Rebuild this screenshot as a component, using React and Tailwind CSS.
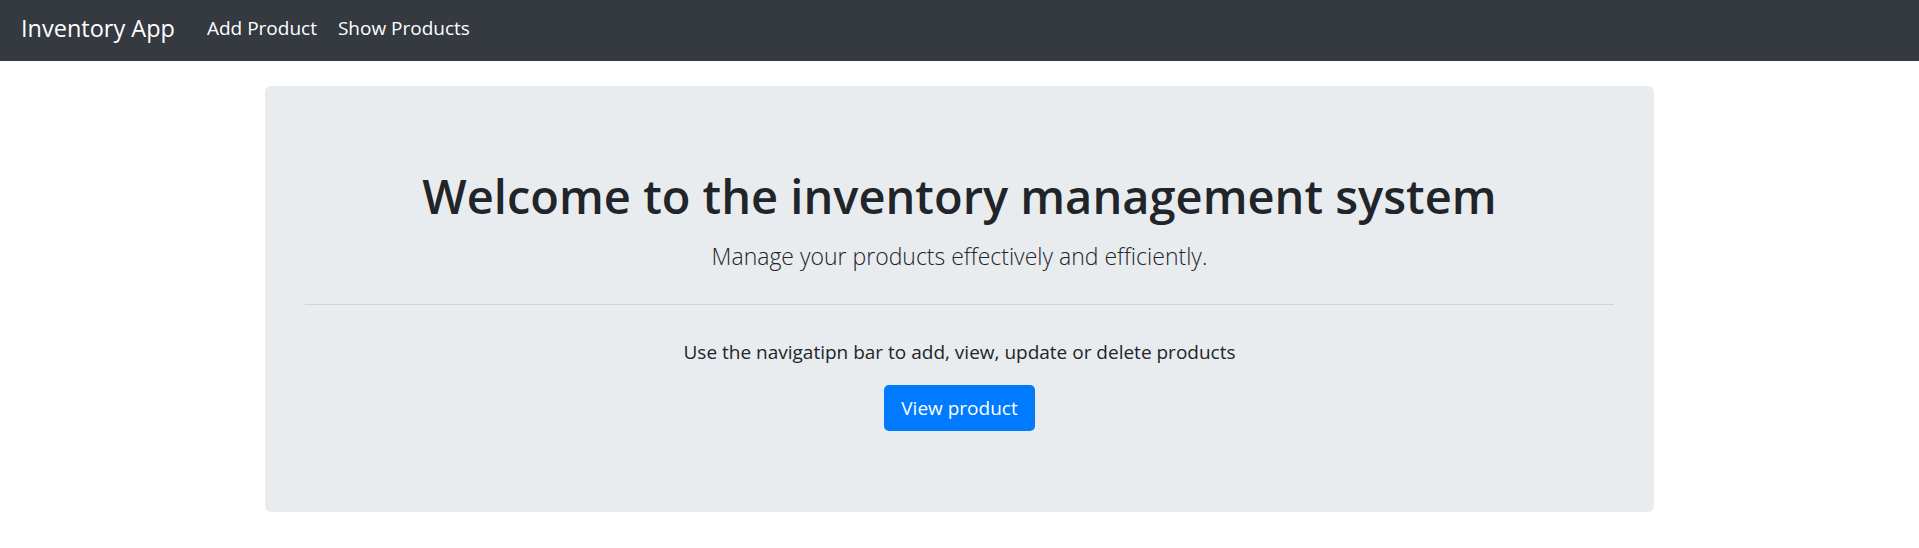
import React from "react";

const font = { fontFamily: '"Open Sans", "Noto Sans", sans-serif' };

const NavBar = () => (
  <nav className="h-[61px] bg-[#343a40] flex items-center px-[21px] pb-[5px]">
    <a href="#" className="text-white text-[23.5px] leading-[36px] mr-[32px]">
      Inventory App
    </a>
    <div className="flex items-center gap-[21px]">
      <a href="#" className="text-white text-[19px] leading-[29px]">
        Add Product
      </a>
      <a href="#" className="text-white text-[19px] leading-[29px]">
        Show Products
      </a>
    </div>
  </nav>
);

const App = () => {
  return (
    <div className="min-h-[548px] bg-white text-[#212529]" style={font}>
      <NavBar />
      <div className="w-[1389px] mx-auto mt-[25px] bg-[#e9ecef] rounded-[6px] px-[40px] pt-[78px] pb-[81px] text-center">
        <h1 className="text-[47px] leading-[64px] font-semibold">
          Welcome to the inventory management system
        </h1>
        <p className="text-[23px] leading-[36px] font-light mt-[10px]">
          Manage your products effectively and efficiently.
        </p>
        <hr className="border-0 border-t border-[rgba(0,0,0,0.1)] mt-[30px] mb-[32px]" />
        <p className="text-[19px] leading-[30px]">
          Use the navigatipn bar to add, view, update or delete products
        </p>
        <button className="mt-[18px] bg-[#007bff] text-white text-[19px] leading-[30px] px-[17px] py-[8px] rounded-[5px]">
          View product
        </button>
      </div>
    </div>
  );
};

export default App;
